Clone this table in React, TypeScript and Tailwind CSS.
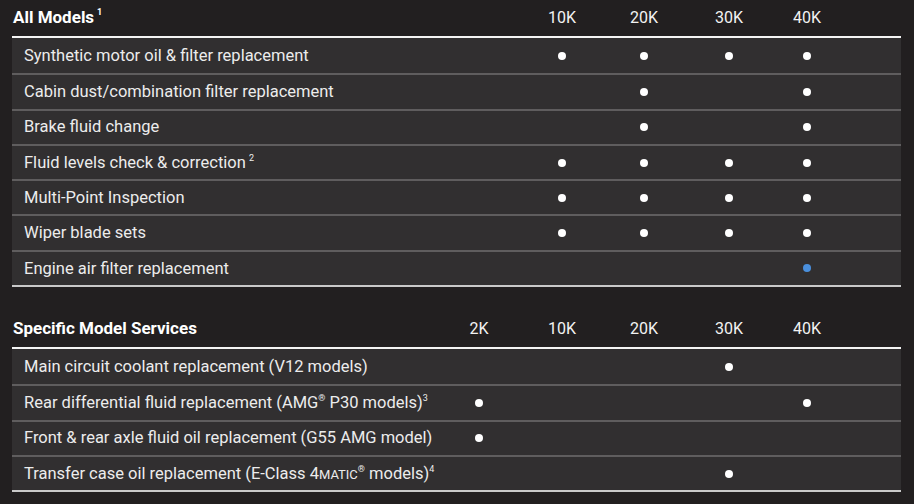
import React from "react";

type Row = { label: React.ReactNode; marks: (0 | 1 | 2)[] };

const cols = ["2K", "10K", "20K", "30K", "40K"];
const colW = ["w-[78px]", "w-[88px]", "w-[76px]", "w-[94px]", "w-[62px]"];

const Sup = ({ children, gap = true }: { children: React.ReactNode; gap?: boolean }) => (
  <span className={`text-[9px] leading-none align-top relative top-[3px] ${gap ? "ml-[3px]" : ""}`}>{children}</span>
);

const allModels: Row[] = [
  { label: "Synthetic motor oil & filter replacement", marks: [0, 1, 1, 1, 1] },
  { label: "Cabin dust/combination filter replacement", marks: [0, 0, 1, 0, 1] },
  { label: "Brake fluid change", marks: [0, 0, 1, 0, 1] },
  { label: <>Fluid levels check &amp; correction<Sup>2</Sup></>, marks: [0, 1, 1, 1, 1] },
  { label: "Multi-Point Inspection", marks: [0, 1, 1, 1, 1] },
  { label: "Wiper blade sets", marks: [0, 1, 1, 1, 1] },
  { label: "Engine air filter replacement", marks: [0, 0, 0, 0, 2] },
];

const specific: Row[] = [
  { label: "Main circuit coolant replacement (V12 models)", marks: [0, 0, 0, 1, 0] },
  { label: <>Rear differential fluid replacement (AMG<Sup gap={false}>®</Sup> P30 models)<Sup gap={false}>3</Sup></>, marks: [1, 0, 0, 0, 1] },
  { label: "Front & rear axle fluid oil replacement (G55 AMG model)", marks: [1, 0, 0, 0, 0] },
  { label: <>Transfer case oil replacement (E-Class 4<span className="text-[13px]">MATIC</span><Sup gap={false}>®</Sup> models)<Sup gap={false}>4</Sup></>, marks: [0, 0, 0, 1, 0] },
];

function Dot({ kind }: { kind: 0 | 1 | 2 }) {
  if (!kind) return null;
  return <span className={`block w-[8px] h-[8px] rounded-full ${kind === 2 ? "bg-[#4a8fdc]" : "bg-white"}`} />;
}

function Section({ title, rows, showTwoK }: { title: React.ReactNode; rows: Row[]; showTwoK: boolean }) {
  return (
    <div>
      <div className="flex items-center h-[36px] text-white">
        <div className="flex-1 font-bold text-[17px] pl-[1px]">{title}</div>
        {cols.map((c, i) => (
          <div key={c} className={`${colW[i]} text-center text-[16px] text-[#f2f2f2]`}>{i === 0 && !showTwoK ? "" : c}</div>
        ))}
        <div className="w-[63px]" />
      </div>
      <div className="border-t-2 border-[#f4f4f4] bg-[#312f30] border-b-2 border-b-[#c9c9c9]">
        {rows.map((r, ri) => (
          <div key={ri} className={`flex items-center h-[35.3px] ${ri > 0 ? "border-t-2 border-[#5f5d5e]" : ""}`}>
            <div className="flex-1 pl-[12px] pt-[1px] text-[16.5px] text-[#ececec]">{r.label}</div>
            {r.marks.map((m, i) => (
              <div key={i} className={`${colW[i]} flex justify-center`}><Dot kind={m} /></div>
            ))}
            <div className="w-[63px]" />
          </div>
        ))}
      </div>
    </div>
  );
}

export default function App() {
  return (
    <div className="w-[914px] h-[504px] bg-[#221f20] pl-[12px] pr-[13px] font-['Roboto',sans-serif]">
      <Section title={<>All Models<Sup>1</Sup></>} rows={allModels} showTwoK={false} />
      <div className="h-[24px]" />
      <Section title="Specific Model Services" rows={specific} showTwoK={true} />
    </div>
  );
}
